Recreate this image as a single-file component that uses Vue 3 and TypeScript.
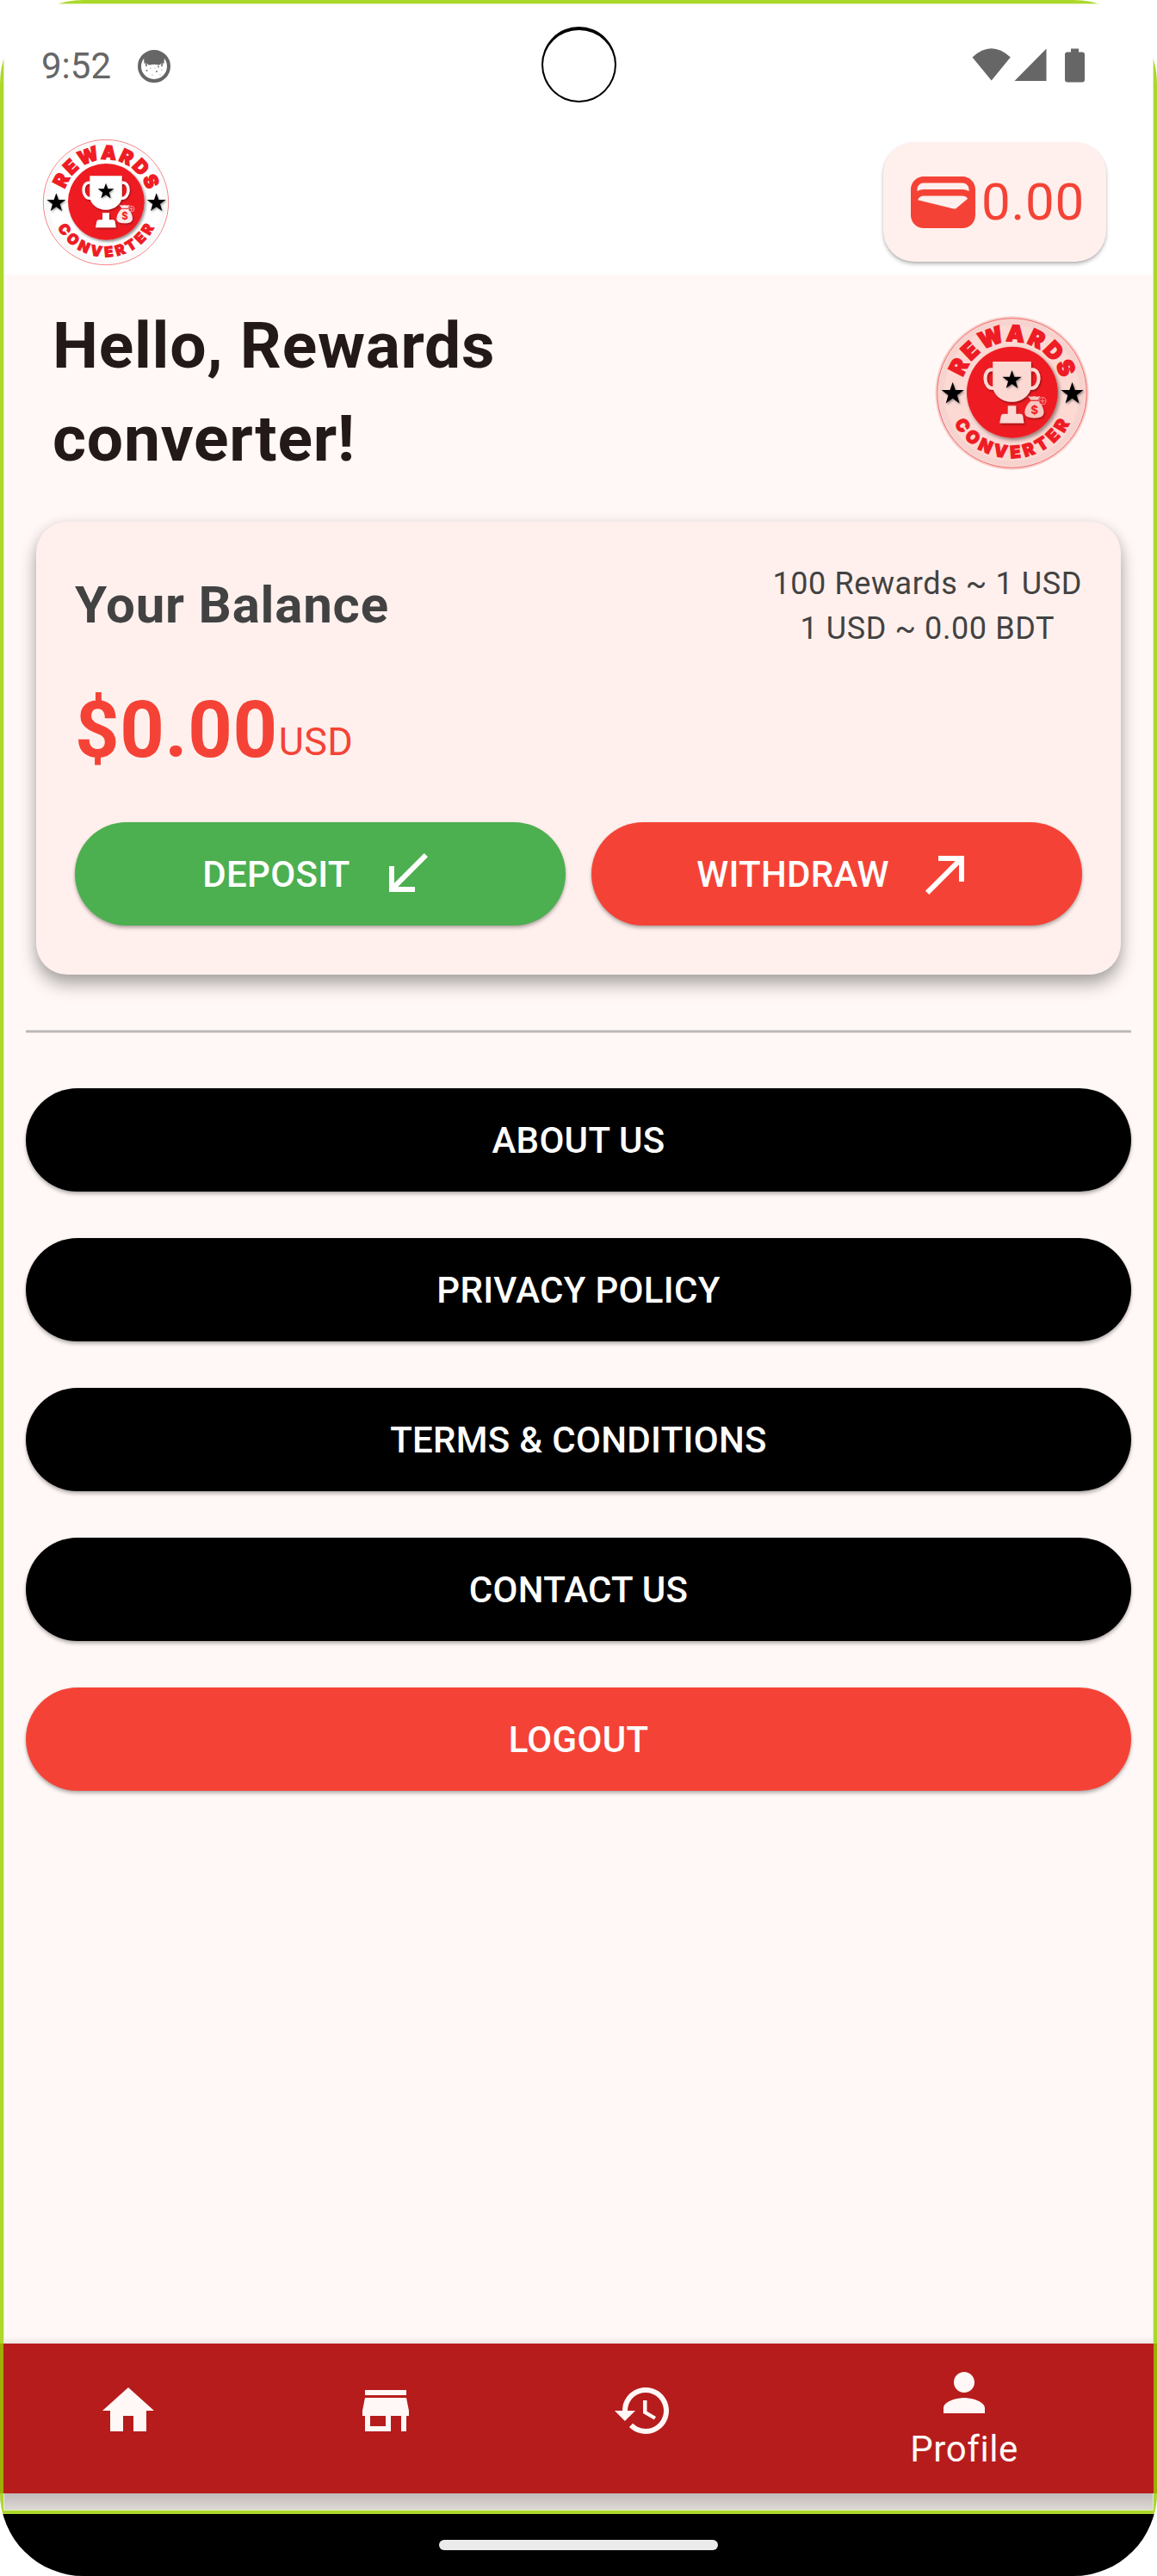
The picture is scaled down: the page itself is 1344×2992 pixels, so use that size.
<script setup lang="ts">
interface Action {
  label: string
  danger?: boolean
}

const actions: Action[] = [
  { label: 'ABOUT US' },
  { label: 'PRIVACY POLICY' },
  { label: 'TERMS & CONDITIONS' },
  { label: 'CONTACT US' },
  { label: 'LOGOUT', danger: true },
]

interface Tab {
  name: string
  icon: string
  label?: string
}

const tabs: Tab[] = [
  { name: 'home', icon: 'M10 20v-6h4v6h5v-8h3L12 3 2 12h3v8z' },
  { name: 'store', icon: 'M20 4H4v2h16V4zm1 10v-2l-1-5H4l-1 5v2h1v6h10v-6h4v6h2v-6h1zm-9 4H6v-4h6v4z' },
  {
    name: 'history',
    icon: 'M13 3c-4.97 0-9 4.03-9 9H1l3.89 3.89.07.14L9 12H6c0-3.87 3.13-7 7-7s7 3.13 7 7-3.13 7-7 7c-1.93 0-3.68-.79-4.94-2.06l-1.42 1.42C8.27 19.99 10.51 21 13 21c4.97 0 9-4.03 9-9s-4.03-9-9-9zm-1 5v5l4.28 2.54.72-1.21-3.5-2.08V8H12z',
  },
  {
    name: 'profile',
    icon: 'M12 12c2.21 0 4-1.79 4-4s-1.79-4-4-4-4 1.79-4 4 1.79 4 4 4zm0 2c-2.67 0-8 1.34-8 4v2h16v-2c0-2.66-5.33-4-8-4z',
    label: 'Profile',
  },
]
</script>

<template>
  <div class="device">
    <svg class="defs" width="0" height="0" aria-hidden="true">
      <defs>
        <filter id="soft" x="-30%" y="-30%" width="160%" height="160%">
          <feDropShadow dx="5" dy="6" stdDeviation="5" flood-color="#000" flood-opacity="0.45" />
        </filter>
        <filter id="tiny" x="-30%" y="-30%" width="160%" height="160%">
          <feDropShadow dx="3" dy="4" stdDeviation="3" flood-color="#000" flood-opacity="0.4" />
        </filter>
        <path id="arcTop" d="M-150 0 A150 150 0 0 1 150 0" />
        <path id="arcBottom" d="M-190 0 A190 190 0 0 0 190 0" />
        <path id="star" d="M0 -34 L8 -11 H33 L13 4 L20 28 L0 14 L-20 28 L-13 4 L-33 -11 H-8 Z" />
        <g id="logo">
          <circle r="218" fill="var(--paper)" stroke="#f2646a" stroke-width="2.4" />
          <circle r="206" fill="none" stroke="#000" stroke-opacity="0.025" stroke-width="16" />
          <circle cx="1" cy="-2" r="133" fill="#ee1c24" filter="url(#soft)" />
          <text class="logo-text top"><textPath href="#arcTop" startOffset="51%">REWARDS</textPath></text>
          <text class="logo-text bottom"><textPath href="#arcBottom" startOffset="51%">CONVERTER</textPath></text>
          <use href="#star" x="-173" y="2" filter="url(#tiny)" />
          <use href="#star" x="176" y="2" filter="url(#tiny)" />
          <g filter="url(#tiny)">
            <path
              d="M-56 -92 H56 V-22 C56 6 28 26 0 26 C-28 26 -56 6 -56 -22 Z M-12 37 H12 V61 H26 Q31 62 32 67 L35 88 H-36 L-32 67 Q-31 62 -26 61 H-12 Z"
              fill="var(--paper)"
            />
            <path
              d="M-56 -68 C-86 -74 -86 -10 -52 -14 M56 -68 C86 -74 86 -10 52 -14"
              fill="none"
              stroke="var(--paper)"
              stroke-width="10"
            />
            <path
              d="M47 9 Q57 12 65 9 Q73 12 83 9 L75 22 Q92 36 93 56 Q93 73 66 73 Q37 73 37 56 Q39 36 56 22 Z"
              fill="var(--paper)"
              fill-opacity="0.88"
            />
          </g>
          <path d="M55 22 H76" stroke="#ee1c24" stroke-width="3" />
          <circle cx="89" cy="23" r="10" fill="#ee1c24" stroke="var(--paper)" stroke-opacity="0.55" stroke-width="3" />
          <path d="M83 23 H95 M89 17 V29" stroke="var(--paper)" stroke-opacity="0.55" stroke-width="3" />
          <text class="logo-dollar" x="66" y="61">$</text>
          <use href="#star" transform="translate(0 -38) scale(0.85)" filter="url(#tiny)" />
        </g>
      </defs>
    </svg>

    <div class="frame"></div>
    <div class="camera"></div>

    <div class="status">
      <span class="time">9:52</span>
      <svg class="cat" viewBox="0 0 38 38">
        <circle cx="19" cy="19" r="17" fill="#fff" stroke="#666" stroke-width="4" />
        <path d="M7 7 Q19 -4 31 7 L30.500 16 L27.500 14.500 Q26.500 18 24 17.500 Q19 16 14 17.500 Q11.500 18 10.500 14.500 L7.500 16 Z" fill="#666" />
        <path d="M10.500 14 Q9 17 10.500 19 M27.500 14 Q29 17 27.500 19" fill="none" stroke="#666" stroke-width="1.600" />
        <g fill="#777">
          <circle cx="10.500" cy="24" r="1" /><circle cx="24" cy="19.500" r="1" />
          <circle cx="22" cy="25" r="1" /><circle cx="15" cy="21" r=".6" />
          <circle cx="17" cy="29" r=".6" /><circle cx="28" cy="23" r=".6" />
          <circle cx="20" cy="21" r=".5" /><circle cx="26" cy="29" r=".5" />
        </g>
      </svg>
      <svg class="signals" viewBox="0 0 132 40" fill="#666">
        <path d="M0.500 10.500 Q22.500 -10 44.800 10.500 L22.700 37.500 Z" />
        <path d="M86.500 0.500 V38 H49.500 Z" />
        <path d="M115 0.500 H124 V4.500 H128 Q131 4.500 131 7.500 V36.500 Q131 39.500 128 39.500 H111 Q108 39.500 108 36.500 V7.500 Q108 4.500 111 4.500 H115 Z" />
      </svg>
    </div>

    <header class="appbar">
      <svg class="logo" viewBox="-240 -240 480 480"><use href="#logo" /></svg>
      <div class="chip">
        <svg class="wallet" viewBox="2 4 20 16">
          <path
            fill="#f44336"
            d="M18 4H6C3.790 4 2 5.790 2 8v8c0 2.210 1.790 4 4 4h12c2.210 0 4-1.790 4-4V8c0-2.210-1.790-4-4-4zm-1.860 9.770c-.24.2-.57.28-.88.2L4.150 11.250C4.450 10.520 5.160 10 6 10h12c.67 0 1.260.34 1.630.84l-3.490 2.930zM6 6h12c1.100 0 2 .9 2 2v.55c-.59-.34-1.270-.55-2-.55H6c-.73 0-1.410.21-2 .55V8c0-1.100.9-2 2-2z"
          />
        </svg>
        <span>0.00</span>
      </div>
    </header>

    <main class="content">
      <section class="hero">
        <h1>Hello, Rewards<br />converter!</h1>
        <svg class="avatar" viewBox="-240 -240 480 480">
          <circle r="224" fill="#f6d0cb" />
          <use href="#logo" />
        </svg>
      </section>

      <section class="card">
        <div class="card-top">
          <h2>Your Balance</h2>
          <p class="rates">100 Rewards ~ 1 USD<br />1 USD ~ 0.00 BDT</p>
        </div>
        <div class="amount"><strong>$0.00</strong><span>USD</span></div>
        <div class="pair">
          <button class="btn green">
            <span>DEPOSIT</span>
            <svg viewBox="0 0 24 24"><path fill="#fff" d="M20 5.410 18.590 4 7 15.590V9H5v10h10v-2H8.410z" /></svg>
          </button>
          <button class="btn red">
            <span>WITHDRAW</span>
            <svg viewBox="0 0 24 24"><path fill="#fff" d="M9 5v2h6.590L4 18.590 5.410 20 17 8.410V15h2V5z" /></svg>
          </button>
        </div>
      </section>

      <div class="rule"></div>

      <div class="actions">
        <button v-for="a in actions" :key="a.label" class="btn" :class="a.danger ? 'red' : 'black'">
          <span>{{ a.label }}</span>
        </button>
      </div>
    </main>

    <nav class="tabs">
      <div v-for="t in tabs" :key="t.name" class="tab" :class="{ active: t.label }">
        <svg viewBox="0 0 24 24"><path fill="#fff8f7" :d="t.icon" /></svg>
        <span v-if="t.label">{{ t.label }}</span>
      </div>
    </nav>
    <div class="gap"></div>
    <div class="system"><div class="handle"></div></div>
  </div>
</template>

<style>
body {
  margin: 0;
  background: #fff;
}
</style>

<style scoped>
.device {
  position: relative;
  display: flex;
  flex-direction: column;
  width: 1344px;
  height: 2992px;
  overflow: hidden;
  border-radius: 97px;
  background: #fff;
  font-family: Roboto, 'Noto Sans', sans-serif;
}
.defs {
  position: absolute;
}
.frame {
  position: absolute;
  z-index: 1;
  inset: 0 0 72px 0;
  border: 4px solid #abd82b;
  box-shadow: inset 0 0 0 1px #e2f1b8;
}
.camera {
  position: absolute;
  z-index: 2;
  left: 629px;
  top: 31px;
  width: 87px;
  height: 88px;
  box-sizing: border-box;
  border: 2px solid #000;
  border-top-width: 4px;
  border-radius: 50%;
}
.status {
  display: flex;
  align-items: center;
  height: 153px;
  box-sizing: border-box;
  padding: 0 83px 0 48px;
}
.time {
  font-size: 42px;
  line-height: 48px;
  color: #666;
}
.cat {
  width: 38px;
  height: 38px;
  margin-left: 31px;
}
.signals {
  width: 132px;
  height: 40px;
  margin: -2px 0 0 auto;
}
.appbar {
  display: flex;
  align-items: flex-start;
  justify-content: space-between;
  height: 166px;
  box-sizing: border-box;
  padding: 2px 59px 0 43px;
}
.logo,
.avatar {
  --paper: #fff;
  width: 160px;
  height: 160px;
  overflow: visible;
}
.avatar {
  --paper: #fdd9d4;
  width: 191px;
  height: 191px;
}
.logo-text {
  font-family: Inter, Roboto, sans-serif;
  font-weight: 900;
  fill: #ee1c24;
  stroke: #ee1c24;
  text-anchor: middle;
}
.logo-text.top {
  font-size: 66px;
  letter-spacing: 7px;
  stroke-width: 4px;
}
.logo-text.bottom {
  font-size: 50px;
  letter-spacing: 12px;
  stroke-width: 3px;
}
.logo-dollar {
  font-family: Inter, Roboto, sans-serif;
  font-weight: 700;
  font-size: 34px;
  fill: #ee1c24;
  text-anchor: middle;
}
.chip {
  display: flex;
  align-items: center;
  width: 259px;
  height: 139px;
  margin-top: 10px;
  box-sizing: border-box;
  padding-left: 32px;
  border-radius: 36px;
  background: #fff0ed;
  color: #f44336;
  font-size: 60px;
  letter-spacing: 0.75px;
  box-shadow: 0 3px 4px rgba(0, 0, 0, 0.24), 0 1px 2px rgba(0, 0, 0, 0.1);
}
.wallet {
  width: 75px;
  height: 60px;
  margin-right: 7px;
}
.content {
  flex: 1;
  box-sizing: border-box;
  padding: 28px 30px 0;
  background: #fff8f6;
  box-shadow: inset 0 -8px 8px -6px rgba(0, 0, 0, 0.1);
}
.hero {
  display: flex;
  align-items: center;
  justify-content: space-between;
  height: 219px;
  padding: 0 43px 0 31px;
}
h1,
h2,
p {
  margin: 0;
}
h1 {
  margin-top: -3px;
  font-size: 75px;
  line-height: 108px;
  letter-spacing: 0.75px;
  color: #231918;
}
.card {
  height: 526px;
  margin: 40px 12px 0;
  box-sizing: border-box;
  padding: 45px 45px 0;
  border-radius: 36px;
  background: #fff0ed;
  box-shadow: 0 12px 20px rgba(0, 0, 0, 0.3), 0 2px 14px rgba(0, 0, 0, 0.1);
}
.card-top {
  display: flex;
  align-items: center;
  justify-content: space-between;
  height: 103px;
  color: #424242;
}
h2 {
  font-size: 60px;
  line-height: 86px;
  letter-spacing: 0.8px;
}
.rates {
  margin-top: 4px;
  font-size: 36px;
  line-height: 51.5px;
  letter-spacing: 0.6px;
  text-align: center;
}
.amount {
  display: flex;
  align-items: flex-start;
  height: 129px;
  margin-top: 27px;
  color: #f44336;
  line-height: 129px;
}
.amount strong {
  margin-top: 3px;
  font-size: 90px;
  letter-spacing: 0.6px;
}
.amount span {
  margin: 16px 0 0 1px;
  font-size: 45px;
  letter-spacing: 0.3px;
}
.pair {
  display: flex;
  gap: 30px;
  margin-top: 45px;
}
.btn {
  display: flex;
  align-items: center;
  justify-content: center;
  flex: 1;
  height: 120px;
  padding: 0;
  border: 0;
  border-radius: 60px;
  color: #fff;
  font-family: inherit;
  font-size: 42px;
  font-weight: 500;
  letter-spacing: 0.3px;
  box-shadow: 0 3px 4px rgba(0, 0, 0, 0.26), 0 1px 3px rgba(0, 0, 0, 0.1);
}
.btn svg {
  width: 72px;
  height: 72px;
  margin-left: 30px;
}
.green {
  background: #4caf50;
}
.red {
  background: #f44336;
}
.black {
  background: #000;
}
.rule {
  height: 2px;
  margin-top: 64px;
  border: solid #dedad9;
  border-width: 1px 0;
  background: #b9b8b8;
}
.actions {
  display: flex;
  flex-direction: column;
  gap: 54px;
  margin-top: 64px;
}
.actions .btn {
  flex: none;
}
.tabs {
  position: relative;
  z-index: 2;
  display: flex;
  height: 174px;
  background: linear-gradient(90deg, #9fad05 4px, #b71c1c 4px, #b71c1c 1340px, #9fad05 1340px);
}
.tab {
  display: flex;
  flex: 2;
  flex-direction: column;
  align-items: center;
  justify-content: center;
  padding-bottom: 18px;
}
.tab.active {
  flex: 3;
  padding-bottom: 0;
}
.tab svg {
  flex: none;
  width: 72px;
  height: 72px;
}
.tab span {
  height: 60px;
  font-size: 42px;
  line-height: 60px;
  letter-spacing: 0.6px;
  color: #fff8f7;
}
.gap {
  height: 24px;
  background: linear-gradient(#c1b9b9, #dfdad7 20px);
}
.system {
  display: flex;
  align-items: center;
  justify-content: center;
  height: 72px;
  background: #000;
}
.handle {
  width: 324px;
  height: 12px;
  border-radius: 6px;
  background: #ebebeb;
}
</style>
